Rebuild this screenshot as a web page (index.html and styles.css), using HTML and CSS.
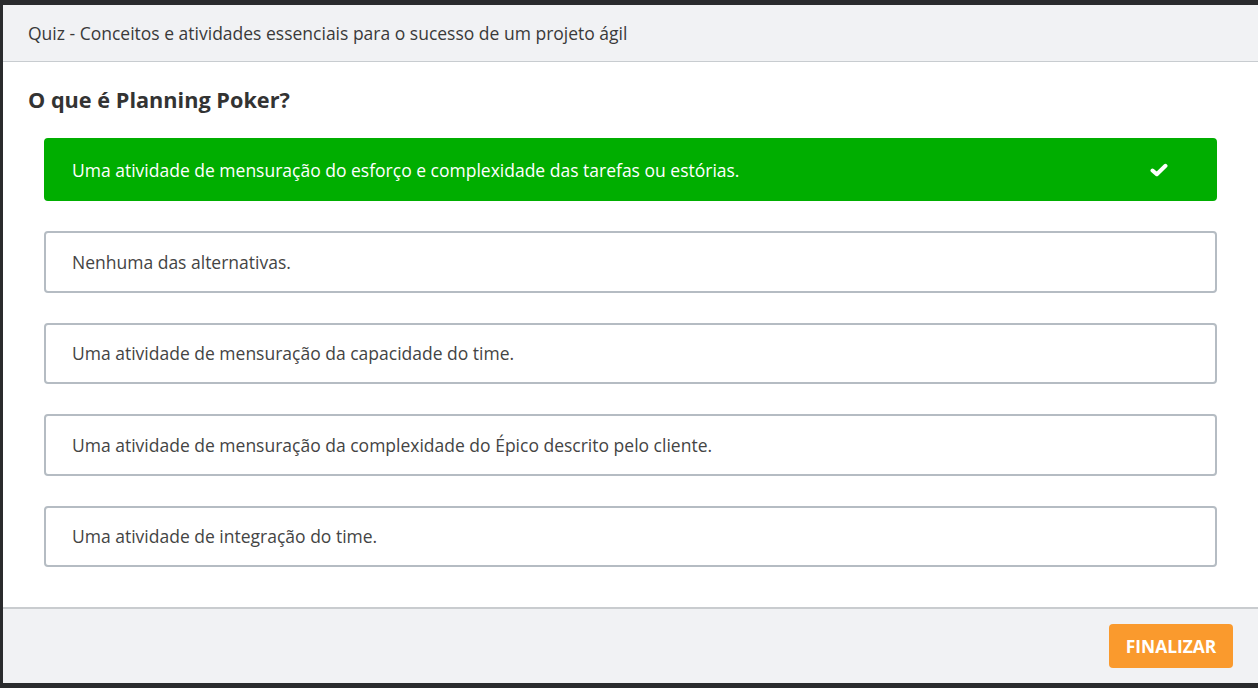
FILE: index.html
```html
<!DOCTYPE html>
<html lang="pt-BR">
<head>
<meta charset="utf-8">
<title>Quiz</title>
<link rel="stylesheet" href="styles.css">
</head>
<body>
<div class="modal">
  <div class="modal-header">Quiz - Conceitos e atividades essenciais para o sucesso de um projeto ágil</div>
  <div class="modal-body">
    <h2 class="question">O que é Planning Poker?</h2>
    <div class="options">
      <div class="option correct">
        <span>Uma atividade de mensuração do esforço e complexidade das tarefas ou estórias.</span>
        <svg class="check" width="18" height="14" viewBox="0 0 18 14"><path d="M2.5 7.5 L6.8 11.2 L15.5 2.8" fill="none" stroke="#fff" stroke-width="4" stroke-linecap="round" stroke-linejoin="round"/></svg>
      </div>
      <div class="option"><span>Nenhuma das alternativas.</span></div>
      <div class="option"><span>Uma atividade de mensuração da capacidade do time.</span></div>
      <div class="option"><span>Uma atividade de mensuração da complexidade do Épico descrito pelo cliente.</span></div>
      <div class="option"><span>Uma atividade de integração do time.</span></div>
    </div>
  </div>
  <div class="modal-footer">
    <button class="btn-finish">FINALIZAR</button>
  </div>
</div>
</body>
</html>
```
FILE: styles.css
```css
html, body {
  margin: 0;
  padding: 0;
  background: #2a2b2d;
  font-family: "Open Sans", "Noto Sans", sans-serif;
}
.modal {
  margin: 5px 0 0 3px;
  width: 1255px;
  height: 678px;
  background: #fff;
  display: flex;
  flex-direction: column;
}
.modal-header {
  flex: none;
  height: 57px;
  box-sizing: border-box;
  background: #f1f2f4;
  border-bottom: 1px solid #c8ccd0;
  padding: 0 25px;
  display: flex;
  align-items: center;
  font-size: 17.5px;
  color: #3a3a3a;
}
.modal-body {
  flex: 1;
  padding: 0 41px 0 25px;
}
.question {
  margin: 24px 0 0 0;
  font-size: 21.7px;
  font-weight: 700;
  color: #333;
  line-height: 28px;
}
.options {
  margin: 24px 0 0 16px;
  display: flex;
  flex-direction: column;
  gap: 30px;
}
.option {
  height: 61.5px;
  box-sizing: border-box;
  border: 2px solid #b5bcc3;
  border-radius: 4px;
  padding: 0 26px;
  display: flex;
  align-items: center;
  justify-content: space-between;
  font-size: 17.5px;
  color: #444;
}
.option.correct {
  height: 63px;
  background: #00ae00;
  border-color: #00ae00;
  color: #fff;
  padding-right: 47px;
}
.check { display: block; }
.modal-footer {
  flex: none;
  height: 76px;
  box-sizing: border-box;
  background: #f1f2f4;
  border-top: 2px solid #c9cccf;
  display: flex;
  align-items: center;
  justify-content: flex-end;
  padding-right: 25px;
}
.btn-finish {
  width: 124px;
  height: 44px;
  border: none;
  border-radius: 4px;
  background: #fa9a2d;
  color: #fff;
  font-family: "Open Sans", sans-serif;
  font-weight: 700;
  font-size: 17.4px;
  padding: 0;
}
```
